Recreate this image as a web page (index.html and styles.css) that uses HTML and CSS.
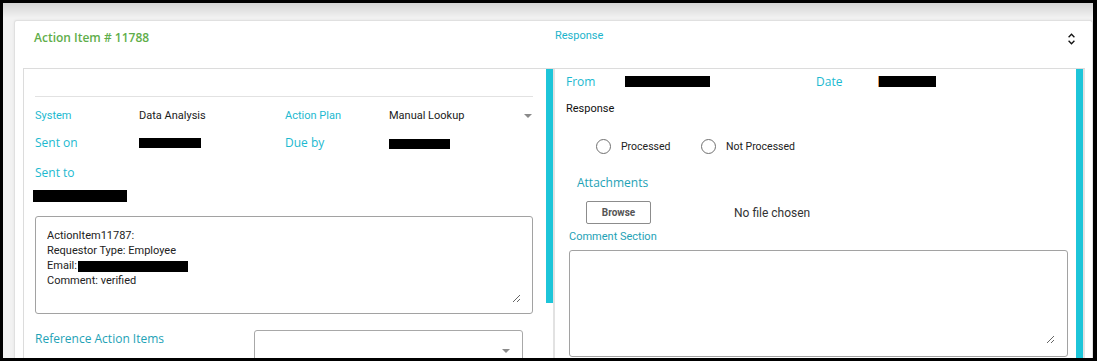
FILE: index.html
```html
<!DOCTYPE html>
<html lang="en">
<head>
    <meta charset="UTF-8">
    <meta name="viewport" content="width=device-width, initial-scale=1.0">
    <title>Action Item # 11788</title>
    <link rel="stylesheet" href="styles.css">
</head>
<body>
    <div class="frame">
        <div class="page">
            <section class="card">
                <header class="card-head">
                    <div class="head-left">
                        <h2 class="card-title">Action Item # 11788</h2>
                    </div>
                    <span class="head-response">Response</span>
                    <button class="toggle" type="button" aria-label="Collapse">
                        <svg width="7" height="12" viewBox="0 0 7 12">
                            <path d="M0.6 4.2 L3.5 1.2 L6.4 4.2 M0.6 7.8 L3.5 10.8 L6.4 7.8" fill="none" stroke="#111" stroke-width="1.3"/>
                        </svg>
                    </button>
                </header>

                <div class="panes">
                    <!-- left: action item details -->
                    <div class="pane pane-left">
                        <div class="pane-body body-left">
                            <div class="pane-top"></div>

                            <div class="meta-row row-1">
                                <span class="lbl-sm">System</span>
                                <span class="val">Data Analysis</span>
                                <span class="lbl-sm">Action Plan</span>
                                <span class="select-val">Manual Lookup <i class="caret"></i></span>
                            </div>
                            <div class="meta-row row-2">
                                <span class="lbl">Sent on</span>
                                <span><i class="redact redact-sent"></i></span>
                                <span class="lbl">Due by</span>
                                <span><i class="redact redact-due"></i></span>
                            </div>
                            <div class="meta-row row-3">
                                <span class="lbl">Sent to</span>
                            </div>
                            <div class="redact redact-to"></div>

                            <div class="note-box">
                                <div class="note-text">ActionItem11787:<br>Requestor Type: Employee<br>Email:<i class="redact redact-mail"></i><br>Comment: verified</div>
                            </div>

                            <div class="ref-row">
                                <span class="lbl lbl-dark ref-lbl">Reference Action Items</span>
                                <div class="ref-select"><i class="caret"></i></div>
                            </div>
                        </div>
                        <div class="scroll"><div class="thumb thumb-left"></div></div>
                    </div>

                    <!-- right: response form -->
                    <div class="pane pane-right">
                        <div class="pane-body body-right">
                            <div class="from-row">
                                <span class="lbl">From</span>
                                <span><i class="redact redact-from"></i></span>
                                <span class="lbl">Date</span>
                                <span><i class="redact redact-date"></i></span>
                            </div>

                            <div class="resp-label">Response</div>

                            <div class="radio-row">
                                <label class="radio-opt radio-first"><input type="radio" name="status"><span>Processed</span></label>
                                <label class="radio-opt"><input type="radio" name="status"><span>Not Processed</span></label>
                            </div>

                            <div class="lbl lbl-dark attach-lbl">Attachments</div>
                            <div class="file-row">
                                <button class="browse" type="button">Browse</button>
                                <span class="file-name">No file chosen</span>
                            </div>

                            <div class="lbl-sm lbl-dark comment-lbl">Comment Section</div>
                            <div class="comment-box">
                                <textarea class="comment-input"></textarea>
                            </div>
                        </div>
                        <div class="scroll"><div class="thumb thumb-right"></div></div>
                    </div>
                </div>
            </section>
        </div>
    </div>
</body>
</html>
```

FILE: styles.css
```css
* {
    box-sizing: border-box;
}
body {
    margin: 0;
    font-family: Roboto, "Liberation Sans", sans-serif;
    font-size: 11px;
    color: #222;
}
.frame {
    width: 1097px;
    height: 361px;
    border: 3px solid #000;
    border-right-width: 4px;
    overflow: hidden;
}
.page {
    height: 100%;
    padding: 17px 0 0 11px;
    background: linear-gradient(#d4d4d4, #f2f2f2 15px, #f2f2f2);
}
.card {
    height: 100%;
    display: flex;
    flex-direction: column;
    background: #fff;
    border: 1px solid #e0e0e0;
    border-bottom: 0;
    border-radius: 3px 3px 0 0;
    padding: 0 7px 0 8px;
    box-shadow: 0 0 3px rgba(0, 0, 0, 0.06);
}

/* header */
.card-head {
    height: 47px;
    flex: none;
    display: flex;
    align-items: flex-start;
    padding-top: 8px;
}
.head-left {
    width: 532px;
    padding-left: 11px;
}
.card-title {
    margin: 1px 0 0;
    font-family: "Open Sans", sans-serif;
    font-size: 12px;
    font-weight: 600;
    line-height: 16px;
    color: #5fae4a;
}
.head-response {
    margin-top: 0;
    line-height: 14px;
    color: #1bb4cb;
}
.toggle {
    margin: 4px 10px 0 auto;
    padding: 0;
    border: 0;
    background: none;
    width: 7px;
    height: 12px;
    display: block;
}
.toggle svg {
    display: block;
}

/* panes */
.panes {
    flex: 1;
    display: flex;
    border-top: 1px solid #dcdcdc;
    min-height: 0;
}
.pane {
    display: flex;
    overflow: hidden;
}
.pane-left {
    width: 532px;
    border-left: 1px solid #dcdcdc;
}
.pane-right {
    flex: 1;
}
.pane-body {
    flex: 1;
    min-width: 0;
}
.scroll {
    width: 9px;
    flex: none;
    border-right: 2px solid #e2e2e2;
}
.thumb {
    background: #1dc5d9;
}
.thumb-left {
    height: 234px;
}
.thumb-right {
    height: 100%;
}

/* text styles */
.lbl {
    font-family: "Open Sans", sans-serif;
    font-size: 12px;
    line-height: 16px;
    color: #1cb9d0;
}
.lbl-sm {
    font-size: 11px;
    line-height: 16px;
    color: #1cb9d0;
}
.lbl-dark {
    color: #1ea2b6;
}
.val {
    line-height: 16px;
    color: #1a1a1a;
}
.redact {
    display: block;
    background: #000;
}

/* left pane */
.body-left {
    padding: 0 13px 0 11px;
}
.pane-top {
    height: 28px;
    border-bottom: 1px solid #e2e2e2;
}
.meta-row {
    display: grid;
    grid-template-columns: 104px 146px 104px 1fr;
    height: 16px;
}
.row-1 {
    margin-top: 11px;
}
.row-2 {
    margin-top: 11px;
}
.row-3 {
    margin-top: 14px;
}
.select-val {
    display: flex;
    justify-content: space-between;
    align-items: center;
    font-size: 11px;
    line-height: 16px;
    color: #1a1a1a;
}
.caret {
    display: block;
    width: 0;
    height: 0;
    border-left: 4px solid transparent;
    border-right: 4px solid transparent;
    border-top: 4px solid #8a8a8a;
}
.select-val .caret {
    margin-right: 1px;
}
.redact-sent {
    width: 62px;
    height: 10px;
    margin-top: 3px;
}
.redact-due {
    width: 61px;
    height: 10px;
    margin-top: 4px;
}
.redact-to {
    width: 94px;
    height: 12px;
    margin: 9px 0 0 -2px;
}
.note-box {
    margin-top: 14px;
    width: 498px;
    height: 98px;
    border: 1px solid #a2a2a2;
    border-radius: 3px;
    padding: 11px 11px 10px;
}
.note-text {
    height: 100%;
    overflow: auto;
    resize: vertical;
    line-height: 15px;
    color: #222;
}
.redact-mail {
    display: inline-block;
    width: 110px;
    height: 11px;
    margin-left: 1px;
    vertical-align: -3px;
}
.ref-row {
    display: flex;
    align-items: flex-start;
    margin-top: 16px;
}
.ref-lbl {
    width: 219px;
    padding-top: 1px;
}
.ref-select {
    width: 269px;
    height: 42px;
    border: 1px solid #a8a8a8;
    border-radius: 3px;
    display: flex;
    justify-content: flex-end;
    align-items: center;
    padding-right: 12px;
}

/* right pane */
.body-right {
    padding: 5px 0 0 11px;
}
.from-row {
    display: grid;
    grid-template-columns: 59px 191px 62px auto;
    height: 16px;
}
.redact-from {
    width: 85px;
    height: 11px;
    margin-top: 2px;
}
.redact-date {
    width: 58px;
    height: 11px;
    margin-top: 2px;
    border-left: 1px solid #e8964a;
}
.resp-label {
    margin-top: 11px;
    line-height: 16px;
    color: #111;
}
.radio-row {
    display: flex;
    align-items: center;
    margin-top: 22px;
    padding-left: 30px;
    height: 15px;
}
.radio-opt {
    display: flex;
    align-items: center;
    gap: 10px;
    font-size: 10.5px;
    line-height: 15px;
    color: #222;
}
.radio-first {
    width: 105px;
}
.radio-opt input {
    appearance: none;
    margin: 0;
    width: 15px;
    height: 15px;
    border: 1.5px solid #707070;
    border-radius: 50%;
    background: #fff;
}
.attach-lbl {
    margin-top: 21px;
    padding-left: 11px;
}
.file-row {
    display: flex;
    align-items: center;
    margin-top: 10px;
    padding-left: 20px;
}
.browse {
    width: 65px;
    height: 23px;
    border: 1px solid #8c8c8c;
    border-radius: 2px;
    background: #fff;
    font-family: Roboto, sans-serif;
    font-size: 10px;
    font-weight: 700;
    color: #555;
    padding: 0;
}
.file-name {
    margin-left: 83px;
    font-size: 12px;
    color: #333;
}
.comment-lbl {
    margin-top: 5px;
    padding-left: 3px;
}
.comment-box {
    margin: 5px 0 0 3px;
    width: 499px;
    height: 107px;
    border: 1px solid #a2a2a2;
    border-radius: 3px;
    padding: 10px 12px 12px 11px;
}
.comment-input {
    display: block;
    width: 100%;
    height: 100%;
    border: 0;
    outline: 0;
    padding: 0;
    resize: vertical;
    font-family: Roboto, sans-serif;
    font-size: 11px;
}
```
